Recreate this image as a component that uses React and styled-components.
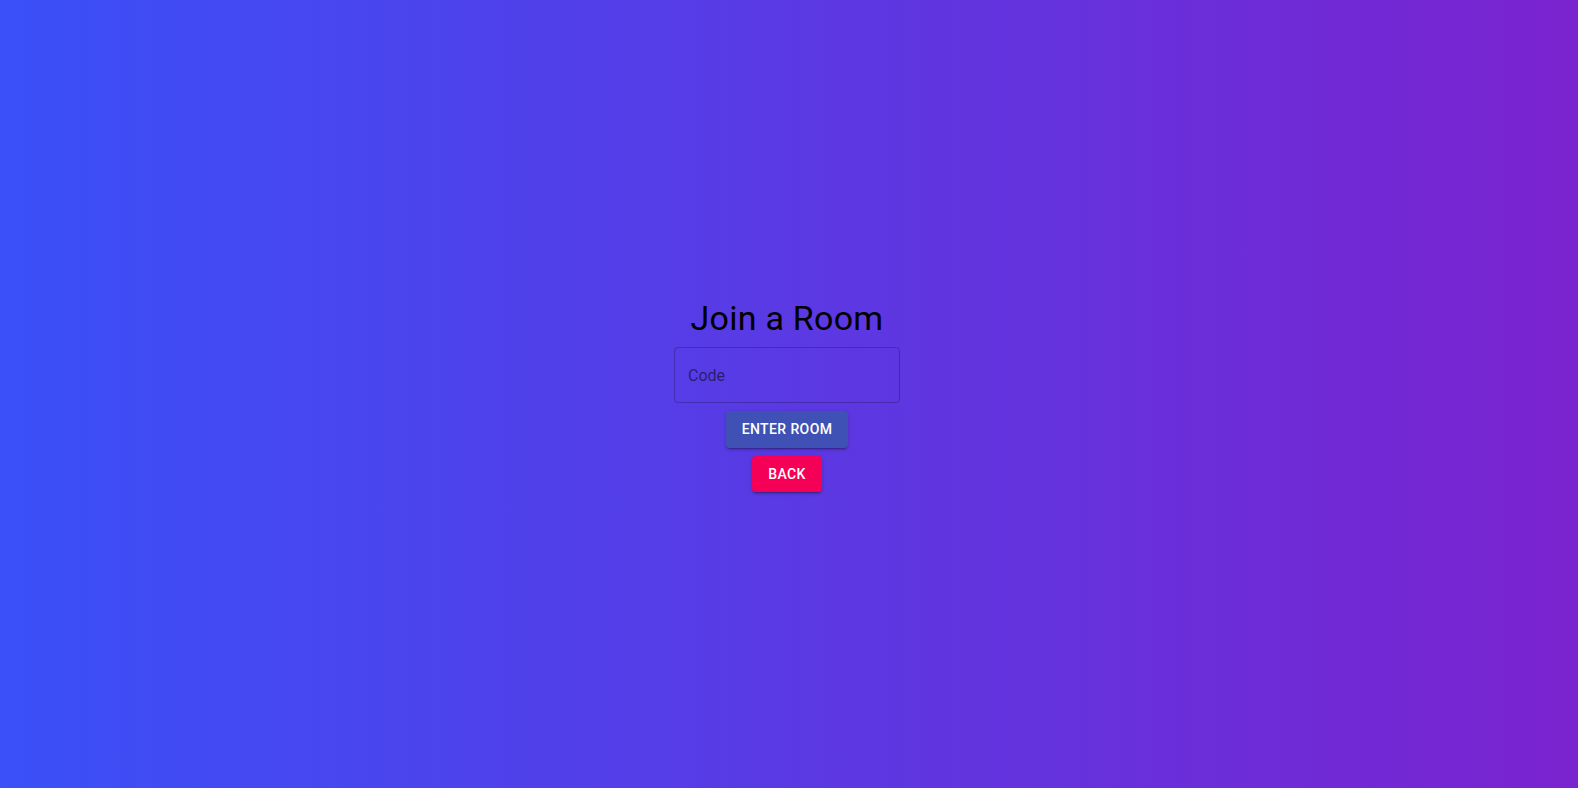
import React from "react";
import styled, { createGlobalStyle } from "styled-components";

const GlobalStyle = createGlobalStyle`
  html, body {
    margin: 0;
    padding: 0;
    height: 100%;
  }
  body {
    font-family: Roboto, "Liberation Sans", Arial, sans-serif;
  }
  #root {
    height: 100%;
  }
`;

const Page = styled.div`
  width: 100%;
  height: 100vh;
  background: linear-gradient(90deg, #3a50f8 0%, #7a23cf 100%);
  display: flex;
  align-items: center;
  justify-content: center;
`;

const Column = styled.div`
  display: flex;
  flex-direction: column;
  align-items: center;
  margin: -3px 4px -5px 0;
`;

const Item = styled.div`
  padding: 4px;
  display: flex;
  justify-content: center;
`;

const Title = styled.h4`
  margin: 0;
  font-family: Roboto, "Liberation Sans", Arial, sans-serif;
  font-weight: 400;
  font-size: 34px;
  line-height: 1.235;
  letter-spacing: 0.00735em;
  color: #000;
`;

const Field = styled.label`
  position: relative;
  display: block;
  width: 226px;
  height: 56px;
  box-sizing: border-box;
  border: 1px solid rgba(0, 0, 0, 0.23);
  border-radius: 4px;
`;

const Input = styled.input`
  width: 100%;
  height: 100%;
  box-sizing: border-box;
  border: 0;
  outline: none;
  background: transparent;
  padding: 16.5px 13px;
  font-family: Roboto, "Liberation Sans", Arial, sans-serif;
  font-size: 16px;
  color: rgba(0, 0, 0, 0.87);
  &::placeholder {
    color: rgba(0, 0, 0, 0.54);
    opacity: 1;
  }
`;

const Button = styled.button`
  min-width: 64px;
  padding: 6px 16px;
  border: 0;
  border-radius: 4px;
  background: ${(p) => p.$bg};
  color: #fff;
  font-family: Roboto, "Liberation Sans", Arial, sans-serif;
  font-weight: 500;
  font-size: 14px;
  line-height: 1.75;
  letter-spacing: 0.02857em;
  text-transform: uppercase;
  cursor: pointer;
  box-shadow: 0px 3px 1px -2px rgba(0, 0, 0, 0.2),
    0px 2px 2px 0px rgba(0, 0, 0, 0.14), 0px 1px 5px 0px rgba(0, 0, 0, 0.12);
`;

export default function App() {
  return (
    <>
      <GlobalStyle />
      <Page>
        <Column>
          <Item>
            <Title>Join a Room</Title>
          </Item>
          <Item>
            <Field>
              <Input type="text" placeholder="Code" />
            </Field>
          </Item>
          <Item>
            <Button $bg="#3f51b5">Enter Room</Button>
          </Item>
          <Item>
            <Button $bg="#f50057">Back</Button>
          </Item>
        </Column>
      </Page>
    </>
  );
}
